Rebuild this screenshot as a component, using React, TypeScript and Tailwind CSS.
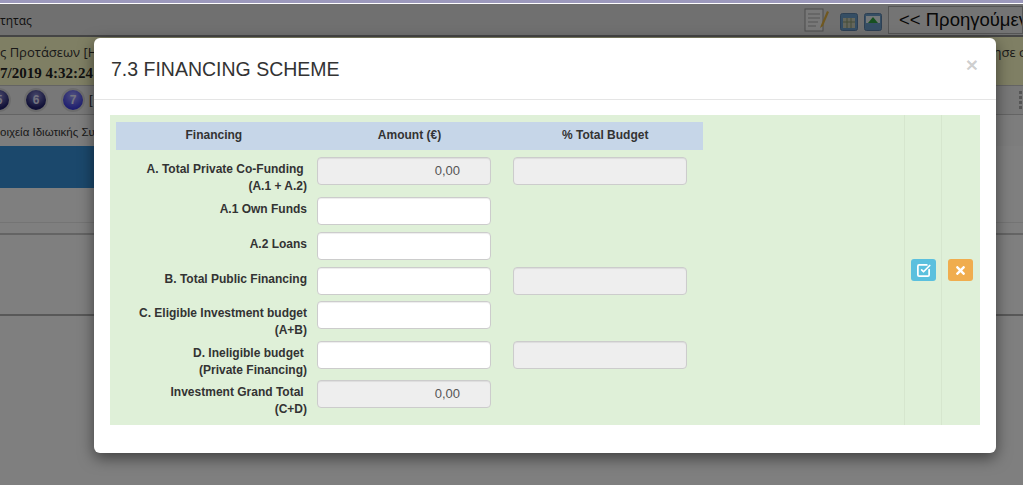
import React from 'react';
import { SquareCheckBig } from 'lucide-react';
import { FaTimes } from 'react-icons/fa';

const rows = [
  { label: ['A. Total Private Co-Funding\u00a0', '(A.1 + A.2)'], h: 'h-[40px]', amount: '0,00', readonly: true, percent: true },
  { label: ['A.1 Own Funds'], h: 'h-[35px]' },
  { label: ['A.2 Loans'], h: 'h-[35px]' },
  { label: ['B. Total Public Financing'], h: 'h-[34px]', percent: true },
  { label: ['C. Eligible Investment budget', '(A+B)'], h: 'h-[40px]' },
  { label: ['D. Ineligible budget\u00a0', '(Private Financing)'], h: 'h-[39px]', percent: true },
  { label: ['Investment Grand Total\u00a0', '(C+D)'], h: 'h-[40px]', amount: '0,00', readonly: true },
];

const Ball = ({ n, bright }: { n: string; bright?: boolean }) => (
  <div
    className={`w-[24px] h-[24px] rounded-full shrink-0 border-2 border-[#d8d8d8] flex items-center justify-center text-[12px] font-bold text-[#e8e8ff] ${
      bright
        ? 'bg-[radial-gradient(circle_at_50%_30%,#a0a0ff,#3c3ce0_75%)]'
        : 'bg-[radial-gradient(circle_at_50%_30%,#9090d8,#20206c_70%)]'
    }`}
  >
    {n}
  </div>
);

const Field = ({ value, readonly }: { value?: string; readonly?: boolean }) => (
  <div
    className={`w-[174px] h-[28px] rounded border border-[#ccc] shadow-[inset_0_1px_1px_rgba(0,0,0,0.075)] flex items-center justify-end pr-[30px] text-[13px] text-[#555] ${
      readonly ? 'bg-[#eeeeee]' : 'bg-white'
    }`}
  >
    {value}
  </div>
);

export default function App() {
  return (
    <div className="relative w-[1023px] h-[485px] overflow-hidden bg-white font-['Liberation_Sans',sans-serif] text-[#333]">
      {/* page behind the dialog */}
      <div className="h-[3px] bg-[#9c99bc]" />
      <div className="h-px bg-white" />
      <div className="h-[33px] bg-[#e0e0e0] border-b-2 border-[#8a8a8a] flex items-center justify-between">
        <span className="text-[12px] font-['Open_Sans',sans-serif] text-[#222] pt-[2px]">τητας</span>
        <div className="flex items-center h-full">
          <svg width="26" height="26" viewBox="0 0 26 26" className="mr-[10px]">
            <rect x="1" y="2" width="18" height="22" fill="#f0f0f0" stroke="#999" />
            <path d="M4 7h12M4 11h12M4 15h10M4 19h8" stroke="#aaa" />
            <path d="M17 18l6-14 2 1-6 14-3 2z" fill="#e0b040" />
          </svg>
          <svg width="18" height="18" viewBox="0 0 18 18" className="mr-[6px] mt-[5px]">
            <rect x="0.5" y="0.5" width="17" height="17" rx="2" fill="#6a9cc8" stroke="#5a80a8" />
            <rect x="3" y="5" width="12" height="10" fill="#c8ccb8" />
            <path d="M7 5v10M11 5v10M3 9h12" stroke="#8a9a70" />
          </svg>
          <svg width="18" height="18" viewBox="0 0 18 18" className="mr-[6px] mt-[5px]">
            <rect x="0.5" y="0.5" width="17" height="17" rx="2" fill="#6a9cc8" stroke="#5a80a8" />
            <rect x="2" y="3" width="14" height="7" fill="#e8f0f4" />
            <path d="M4 10l5-6 5 6z" fill="#2ea040" />
          </svg>
          <div className="w-[135px] h-[28px] bg-[#e8e8e8] border border-[#aaa] pl-[10px] text-[18.5px] leading-[26px] whitespace-nowrap overflow-hidden text-[#111]">
            {'<< Προηγούμενο'}
          </div>
        </div>
      </div>
      <div className="h-[31px] bg-[#fefec8] flex items-center justify-between overflow-hidden text-[13px] font-['Open_Sans',sans-serif]">
        <span className="whitespace-nowrap">ς Προτάσεων [Ηλεκτρονική Υποβολή]</span>
        <span className="whitespace-nowrap -mr-[4px]">ησε σ</span>
      </div>
      <div className="h-[17px] bg-[#fefec8] text-[15px] leading-[11px] font-bold font-['Liberation_Serif',serif] whitespace-nowrap text-[#222]">
        7/2019 4:32:24 μμ
      </div>
      <div className="h-[30px] bg-[#f0f0f0] border-y border-[#c8c8c8] flex items-center justify-between">
        <div className="flex items-center gap-[13px] -ml-[13px]">
          <Ball n="5" />
          <Ball n="6" />
          <Ball n="7" bright />
          <span className="-ml-[9px] text-[13px]">[</span>
        </div>
        <div className="flex flex-col gap-[2px] mr-[1px]">
          <div className="w-[3px] h-[3px] bg-[#aaa]" />
          <div className="w-[3px] h-[3px] bg-[#aaa]" />
          <div className="w-[3px] h-[3px] bg-[#aaa]" />
          <div className="w-[3px] h-[3px] bg-[#aaa]" />
        </div>
      </div>
      <div className="h-[31px] bg-[#fafafa] pt-[2px] text-[11.5px] leading-[30px] whitespace-nowrap">
        οιχεία Ιδιωτικής Συμμετοχής
      </div>
      <div className="h-[42px] w-[500px] bg-[#3690d8]" />
      <div className="h-[35px] border-b border-[#e8e8e8]" />
      <div className="h-[12px] border-b-2 border-[#c8c8c8]" />
      <div className="h-[81px] border-b-2 border-[#b0b0b0]" />

      {/* backdrop */}
      <div className="absolute inset-x-0 top-[4px] bottom-0 bg-black/50" />

      {/* dialog */}
      <div className="absolute left-[94px] top-[38px] w-[902px] h-[415px] bg-white rounded-md shadow-[0_5px_15px_rgba(0,0,0,0.5)]">
        <div className="h-[62px] border-b border-[#e5e5e5] flex items-start justify-between pl-[17px] pr-[18px]">
          <h4 className="text-[19.5px] leading-[22px] mt-[20px] text-[#333]">7.3 FINANCING SCHEME</h4>
          <span className="text-[21px] leading-[21px] font-bold text-black/20 mt-[16px]">×</span>
        </div>
        <div className="ml-[16px] mt-[15px] w-[870px] h-[310px] bg-[#dff0d8] flex">
          <div className="w-[794px] pl-[6px] pt-[7px]">
            <div className="w-[587px] h-[28px] pb-[3px] bg-[#c6d6e8] grid grid-cols-3 items-center text-center text-[12px] font-bold">
              <span>Financing</span>
              <span>Amount (€)</span>
              <span>% Total Budget</span>
            </div>
            <div className="mt-[7px]">
              {rows.map((row, i) => (
                <div key={i} className={`flex ${row.h}`}>
                  <div className="w-[191px] pt-[4px] text-right text-[12px] font-bold leading-[17px] whitespace-nowrap">
                    {row.label.map((line) => (
                      <div key={line}>{line}</div>
                    ))}
                  </div>
                  <div className="ml-[10px]">
                    <Field value={row.amount} readonly={row.readonly} />
                  </div>
                  {row.percent && (
                    <div className="ml-[22px]">
                      <Field readonly />
                    </div>
                  )}
                </div>
              ))}
            </div>
          </div>
          <div className="w-[38px] border-x border-[#d6e6ce] flex items-center justify-center">
            <div className="w-[25px] h-[22px] rounded-[3px] bg-[#5bc0de] flex items-center justify-center text-white">
              <SquareCheckBig size={15} strokeWidth={2.75} />
            </div>
          </div>
          <div className="flex-1 flex items-center justify-center pr-px">
            <div className="w-[25px] h-[22px] rounded-[3px] bg-[#f0ad4e] flex items-center justify-center text-white">
              <FaTimes size={13} />
            </div>
          </div>
        </div>
      </div>
    </div>
  );
}
